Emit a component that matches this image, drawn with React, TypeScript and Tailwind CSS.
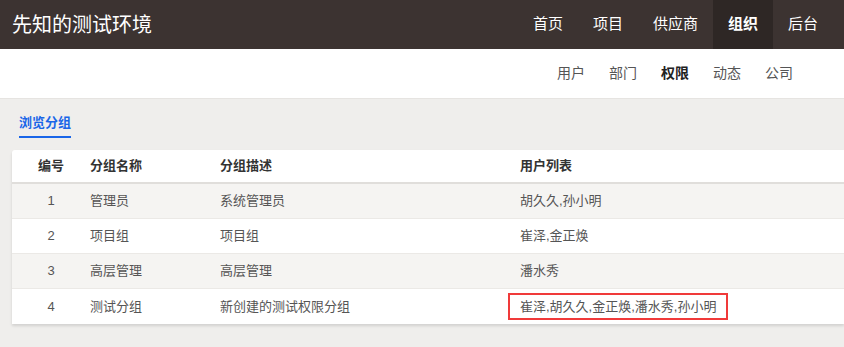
const TOP_NAV = [
  { label: '首页' },
  { label: '项目' },
  { label: '供应商' },
  { label: '组织', active: true },
  { label: '后台' },
]

const SUB_NAV = [
  { label: '用户' },
  { label: '部门' },
  { label: '权限', active: true },
  { label: '动态' },
  { label: '公司' },
]

const ROWS = [
  { id: 1, name: '管理员', desc: '系统管理员', users: '胡久久,孙小明' },
  { id: 2, name: '项目组', desc: '项目组', users: '崔泽,金正焕' },
  { id: 3, name: '高层管理', desc: '高层管理', users: '潘水秀' },
  { id: 4, name: '测试分组', desc: '新创建的测试权限分组', users: '崔泽,胡久久,金正焕,潘水秀,孙小明', marked: true },
]

export default function App() {
  return (
    <div
      className="w-[844px] h-[347px] bg-[#efeeec] overflow-hidden"
      style={{ fontFamily: '"Liberation Sans", "Noto Sans CJK SC", sans-serif' }}
    >
      {/* Topbar */}
      <header className="h-[49px] bg-[#3c3331] flex items-center pl-[12px] pr-[11px]">
        <h1 className="text-[20px] text-white leading-none">先知的测试环境</h1>
        <div className="flex-1" />
        <nav className="flex h-full">
          {TOP_NAV.map((item) => (
            <a
              key={item.label}
              className={
                'h-full flex items-center px-[15px] text-[15px] text-white ' +
                (item.active ? 'bg-[#2e2725] font-bold' : '')
              }
            >
              {item.label}
            </a>
          ))}
        </nav>
      </header>

      {/* Sub nav */}
      <div className="h-[50px] bg-white border-b border-[#e6e4e1] flex items-center justify-end pr-[39px]">
        {SUB_NAV.map((item) => (
          <a
            key={item.label}
            className={
              'px-[12px] text-[14px] ' +
              (item.active ? 'font-bold text-[#222]' : 'text-[#555]')
            }
          >
            {item.label}
          </a>
        ))}
      </div>

      {/* Tabs */}
      <div className="pl-[19px] pt-[16px]">
        <span className="block w-fit text-[13px] font-bold text-[#1a66e8] leading-[16px] pb-[5px] border-b-2 border-[#1a66e8]">
          浏览分组
        </span>
      </div>

      {/* Table */}
      <div className="ml-[12px] mt-[12px] bg-white rounded-tl-[3px] shadow-[0_2px_3px_rgba(0,0,0,0.12)]">
        <div className="grid grid-cols-[78px_130px_300px_1fr] h-[34px] items-center border-b-2 border-[#e0dedb] text-[13px] font-bold text-[#333]">
          <div className="text-center">编号</div>
          <div>分组名称</div>
          <div>分组描述</div>
          <div>用户列表</div>
        </div>
        {ROWS.map((r, i) => (
          <div
            key={r.id}
            className={
              'grid grid-cols-[78px_130px_300px_1fr] h-[35px] items-center text-[13px] text-[#555] ' +
              (i % 2 === 0 ? 'bg-[#f5f4f2] ' : 'bg-white ') +
              (i < ROWS.length - 1 ? 'border-b border-[#ebe9e6]' : '')
            }
          >
            <div className="text-center">{r.id}</div>
            <div>{r.name}</div>
            <div>{r.desc}</div>
            <div>
              {r.marked ? (
                <span className="inline-block -ml-[12px] px-[10px] h-[27px] leading-[23px] border-2 border-[#f03a3a]">
                  {r.users}
                </span>
              ) : (
                r.users
              )}
            </div>
          </div>
        ))}
      </div>
    </div>
  )
}
